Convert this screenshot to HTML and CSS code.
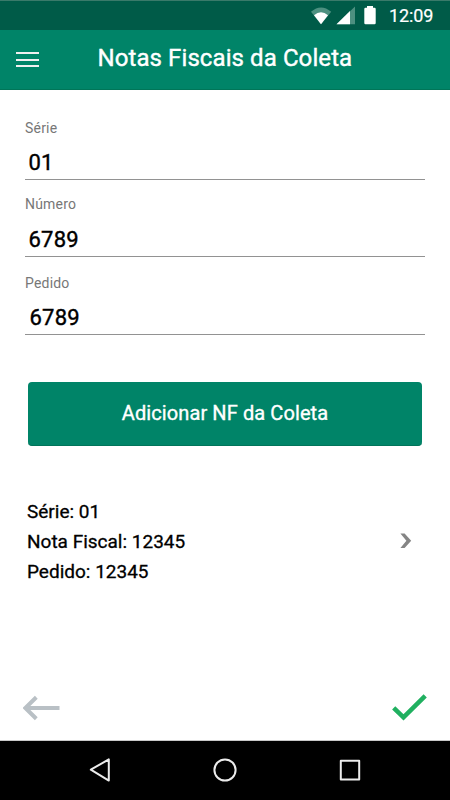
FILE: index.html
```html
<!DOCTYPE html>
<html lang="pt-BR">
<head>
<meta charset="utf-8">
<title>Notas Fiscais da Coleta</title>
<link rel="stylesheet" href="styles.css">
</head>
<body>
<div class="screen">
  <div class="status">
    <svg class="status-icons" width="68" height="29" viewBox="0 0 68 29">
      <path d="M1 11.8Q11 3.2 21.2 11.8L11 24.2Z" fill="#4d9080"/>
      <path d="M4 15.2Q11 9.4 18 15.2L11 24.2Z" fill="#fff"/>
      <path d="M26.5 24.2L45 6.5V24.2Z" fill="#4d9080"/>
      <path d="M26.5 24.2L40 11V24.2Z" fill="#fff"/>
      <path d="M57 6h6v1.8h1.5q1.2 0 1.2 1.2v14q0 1.2-1.2 1.2h-9q-1.2 0-1.2-1.2v-14q0-1.2 1.2-1.2H57Z" fill="#fff"/>
    </svg>
    <span class="clock">12:09</span>
  </div>
  <header class="bar">
    <div class="menu"><i></i><i></i><i></i></div>
    <h1>Notas Fiscais da Coleta</h1>
  </header>
  <main>
    <div class="field">
      <label>Série</label><div class="value">01</div>
    </div>
    <div class="field">
      <label>Número</label><div class="value">6789</div>
    </div>
    <div class="field last">
      <label>Pedido</label><div class="value">6789</div>
    </div>
    <button class="add"><span>Adicionar NF da Coleta</span></button>
    <div class="item">
      <div class="lines">
        <p>Série: 01</p>
        <p>Nota Fiscal: 12345</p>
        <p>Pedido: 12345</p>
      </div>
      <svg width="14" height="18" viewBox="0 0 14 18"><path d="M1.4 1.6H5.6L12.2 8.8L5.6 16H1.4L7.4 8.8Z" fill="#858585"/></svg>
    </div>
    <div class="actions">
      <svg width="38" height="30" viewBox="0 0 38 30"><path d="M36.5 15H3M13.3 4.3L2.4 15L13.3 25.7" fill="none" stroke="#b9c0c5" stroke-width="4"/></svg>
      <svg width="36" height="30" viewBox="0 0 36 30"><path d="M2.7 14.8L12.5 24.4L34.2 2.8" fill="none" stroke="#20b060" stroke-width="4.5"/></svg>
    </div>
  </main>
  <nav class="nav">
    <svg width="450" height="59" viewBox="0 0 450 59" fill="none" stroke="#ececec" stroke-width="2" stroke-linejoin="round">
      <path d="M108.8 18.4V39.6L90.8 28.7Z"/>
      <circle cx="225" cy="29" r="10.6"/>
      <rect x="340.8" y="19.8" width="18.4" height="18.6"/>
    </svg>
  </nav>
</div>
</body>
</html>
```

FILE: styles.css
```css
* { box-sizing: border-box; margin: 0; padding: 0; }
body { font-family: Roboto, "Liberation Sans", sans-serif; background: #fff; color: #000; }
.screen { width: 450px; height: 800px; display: flex; flex-direction: column; overflow: hidden; }
.status { height: 30px; background: #005b48; border-top: 1px solid #3a7a6a; display: flex; justify-content: flex-end; padding-right: 16px; color: #fff; }
.status-icons { margin-right: 11px; margin-top: -1px; }
.clock { font-size: 18px; line-height: 29px; font-weight: 400; width: 45px; white-space: nowrap; letter-spacing: -0.1px; -webkit-text-stroke: 0.2px currentColor; }
.bar { height: 60px; background: #008468; border-bottom: 1px solid #007558; display: flex; align-items: flex-start; padding-left: 16px; color: #fff; }
.menu { width: 23px; margin-top: 22px; display: flex; flex-direction: column; gap: 4.5px; }
.menu i { height: 2px; background: #f0f0f0; }
h1 { font-size: 24px; font-weight: 400; -webkit-text-stroke: 0.4px currentColor; letter-spacing: 0.09px; line-height: 28px; margin: 14px 0 0 58.5px; white-space: nowrap; }
main { flex: 1; padding: 0 25px; display: flex; flex-direction: column; }
.field { height: 77px; border-bottom: 1px solid #929292; padding-top: 14px; }
.field:first-child { height: 90px; padding-top: 28px; }
.field:first-child .value { margin-top: 12px; }
.field.last { height: 78px; padding-top: 16px; }
label { display: block; font-size: 14px; line-height: 20px; color: #777; letter-spacing: 0.2px; }
.value { font-size: 22px; font-weight: 400; -webkit-text-stroke: 0.4px currentColor; letter-spacing: 0.25px; line-height: 26px; margin-top: 13px; padding-left: 3.5px; }
.last .value { margin-top: 12px; padding-left: 4.5px; }
.add { height: 64px; flex: none; margin: 47px 3px 0; border: 0; border-bottom: 1px solid #00745a; border-radius: 4px; background: #008468; color: #fff; font: 400 20px/24px Roboto, sans-serif; -webkit-text-stroke: 0.35px currentColor; letter-spacing: 0.1px; }
.add span { display: block; margin-top: -2px; }
.item { display: flex; justify-content: space-between; align-items: center; margin-top: 51px; padding: 0 12px 0 2px; height: 90px; font-size: 19px; font-weight: 400; -webkit-text-stroke: 0.3px currentColor; letter-spacing: 0; line-height: 30px; }
.item svg { margin-top: -3px; }
.actions { display: flex; justify-content: space-between; margin: 105px -2px 0; padding-top: 1px; }
.nav { height: 60px; background: #000; border-top: 1px solid #c8c8c8; }
.nav svg { display: block; }
```
